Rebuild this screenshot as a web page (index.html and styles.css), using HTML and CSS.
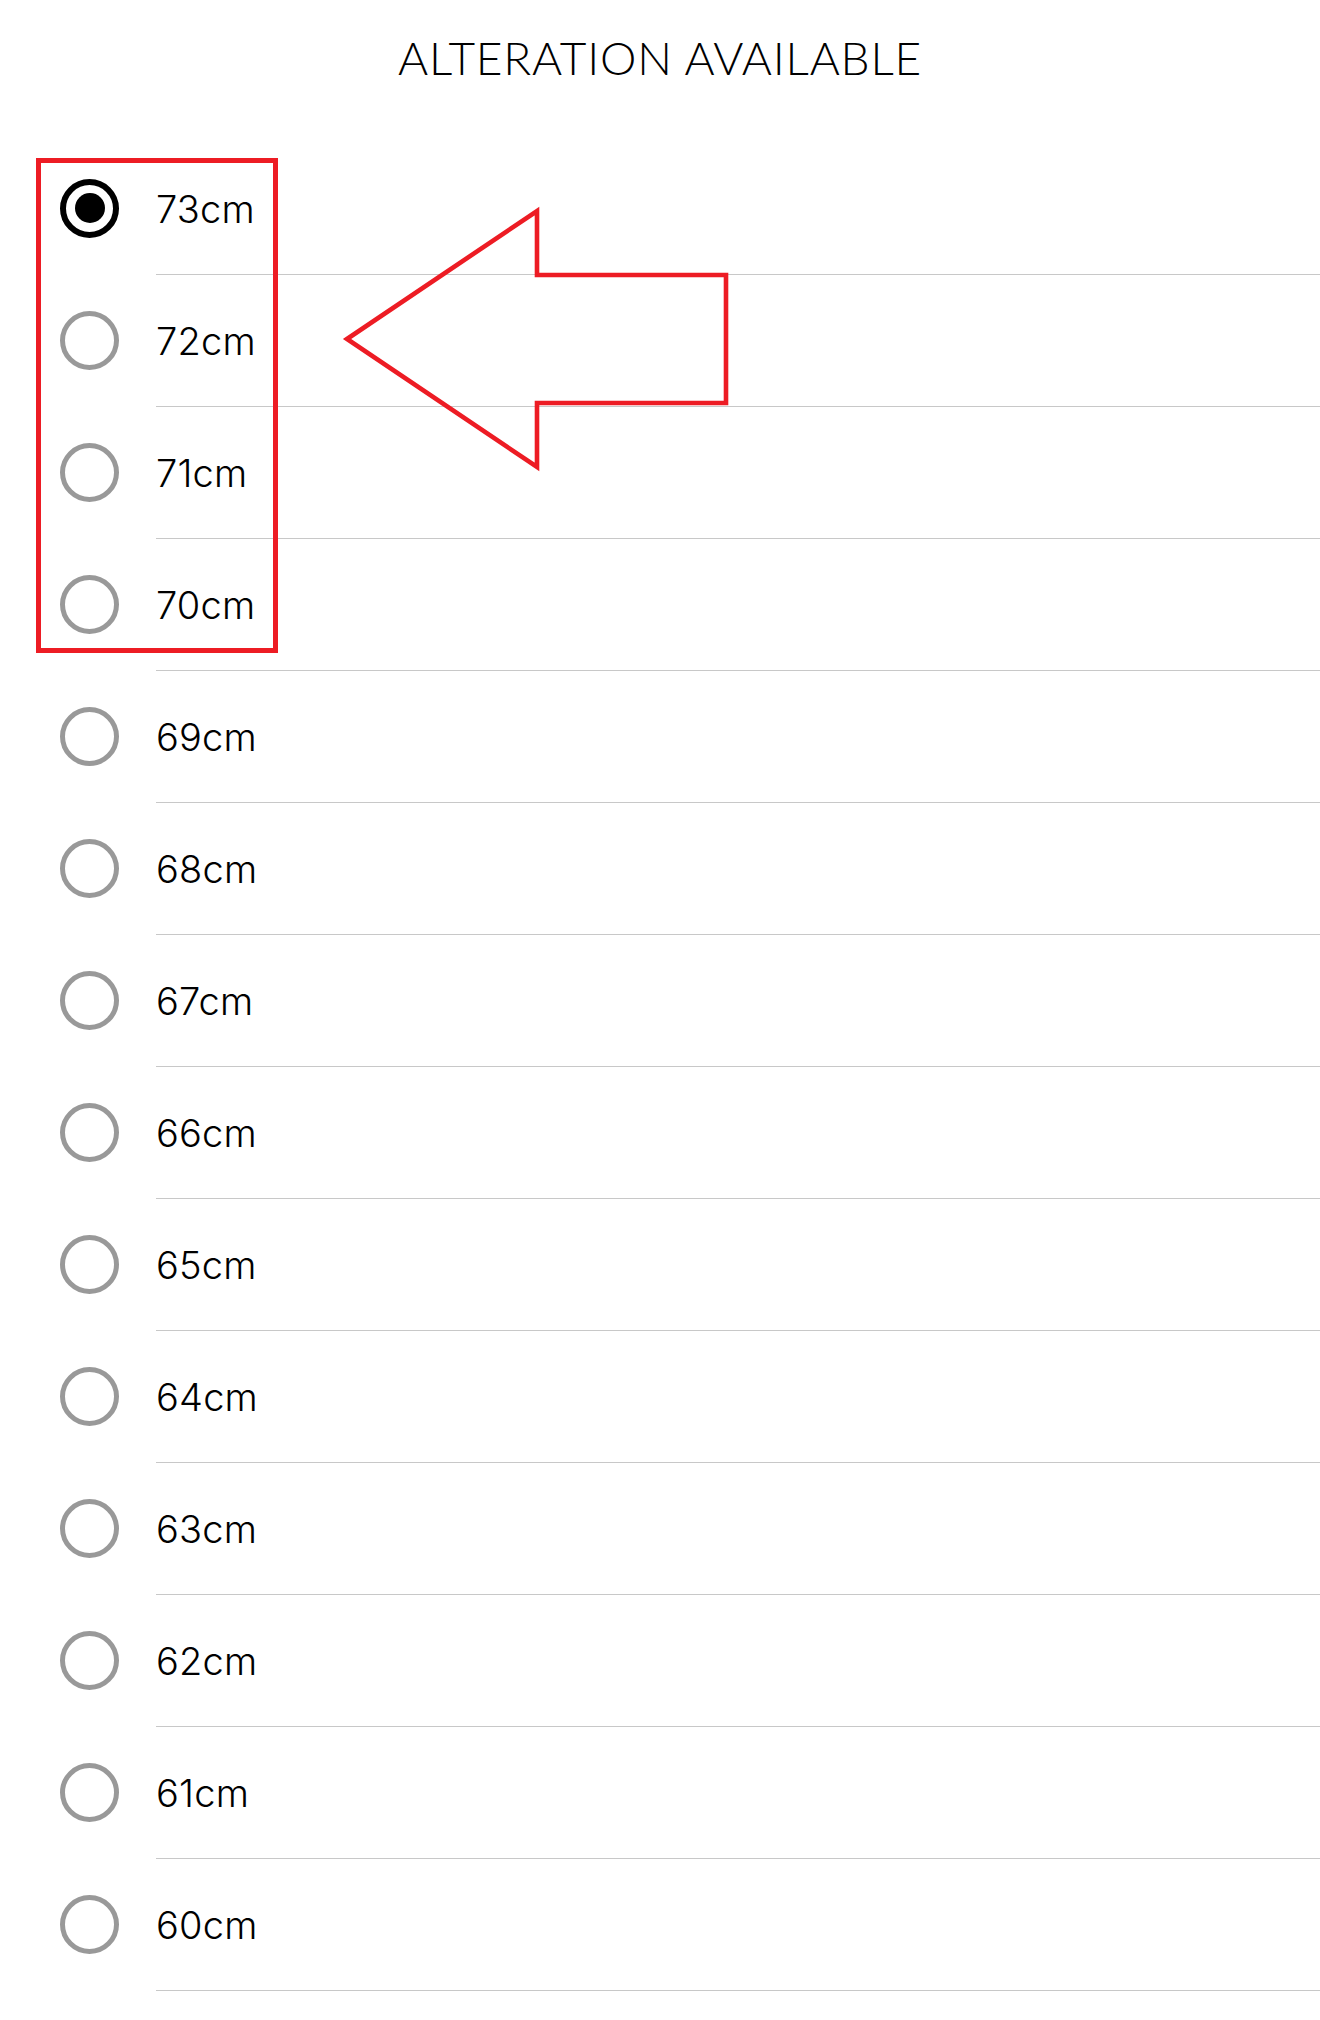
FILE: index.html
```html
<!DOCTYPE html>
<html lang="en">
<head>
<meta charset="utf-8">
<title>Alteration Available</title>
<link rel="stylesheet" href="styles.css">
</head>
<body>
<div class="page">
  <header class="header"><h1 class="title">ALTERATION AVAILABLE</h1></header>
  <ul class="list">
    <li class="row"><span class="radio radio-on"></span><span class="label">73cm</span></li>
    <li class="row"><span class="radio"></span><span class="label">72cm</span></li>
    <li class="row"><span class="radio"></span><span class="label">71cm</span></li>
    <li class="row"><span class="radio"></span><span class="label">70cm</span></li>
    <li class="row"><span class="radio"></span><span class="label">69cm</span></li>
    <li class="row"><span class="radio"></span><span class="label">68cm</span></li>
    <li class="row"><span class="radio"></span><span class="label">67cm</span></li>
    <li class="row"><span class="radio"></span><span class="label">66cm</span></li>
    <li class="row"><span class="radio"></span><span class="label">65cm</span></li>
    <li class="row"><span class="radio"></span><span class="label">64cm</span></li>
    <li class="row"><span class="radio"></span><span class="label">63cm</span></li>
    <li class="row"><span class="radio"></span><span class="label">62cm</span></li>
    <li class="row"><span class="radio"></span><span class="label">61cm</span></li>
    <li class="row"><span class="radio"></span><span class="label">60cm</span></li>
  </ul>
  <div class="highlight-box"></div>
  <svg class="arrow" width="1320" height="700" viewBox="0 0 1320 700" aria-hidden="true">
    <polygon points="347,339 537,211 537,275 726,275 726,403 537,403 537,467" fill="none" stroke="#ed1c24" stroke-width="4.6" stroke-linejoin="miter"/>
  </svg>
</div>
</body>
</html>
```
FILE: styles.css
```css
html, body {
  margin: 0;
  padding: 0;
  background: #ffffff;
}

.page {
  position: relative;
  width: 1320px;
  min-height: 2020px;
  font-family: Inter, "Liberation Sans", Arial, sans-serif;
  color: #000;
}

.header {
  height: 143px;
  box-sizing: border-box;
  padding-top: 35px;
  display: flex;
  justify-content: center;
}

.title {
  margin: 0;
  font-family: Lato, "Liberation Sans", sans-serif;
  font-weight: 300;
  font-size: 46px;
  line-height: 1;
  letter-spacing: 0.8px;
  color: #000;
}

.list {
  list-style: none;
  margin: 0;
  padding: 0;
}

.row {
  display: flex;
  align-items: stretch;
  height: 132px;
}

.radio {
  flex: 0 0 auto;
  align-self: center;
  width: 59px;
  height: 59px;
  box-sizing: border-box;
  margin-left: 60px;
  margin-right: 37px;
  border: 5px solid #999999;
  border-radius: 50%;
  position: relative;
  top: -1px;
}

.radio-on {
  border: 6px solid #000;
}

.radio-on::after {
  content: "";
  position: absolute;
  left: 8.5px;
  top: 8.5px;
  width: 30px;
  height: 30px;
  border-radius: 50%;
  background: #000;
}

.label {
  flex: 1 1 auto;
  display: flex;
  align-items: center;
  box-sizing: border-box;
  border-bottom: 1px solid #c8c8c8;
  font-size: 38px;
  font-weight: 300;
  color: #000;
  letter-spacing: 0.2px;
}

.highlight-box {
  position: absolute;
  left: 36px;
  top: 158px;
  width: 242px;
  height: 495px;
  box-sizing: border-box;
  border: 5px solid #ed1c24;
}

.arrow {
  position: absolute;
  left: 0;
  top: 0;
}
```
